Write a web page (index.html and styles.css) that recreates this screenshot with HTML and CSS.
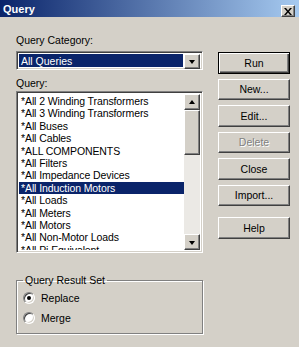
FILE: index.html
```html
<!DOCTYPE html>
<html lang="en">
<head>
  <meta charset="UTF-8" />
  <title>Query</title>
  <meta name="viewport" content="width=device-width, initial-scale=1" />
  <link rel="stylesheet" href="styles.css">
</head>
<body>
  <div class="window">
    <div class="titlebar">
      <span class="title">Query</span>
      <span class="close">
        <svg viewBox="0 0 8 7" width="8" height="7">
          <path d="M0 0h2l2 2.5 2-2.5h2l-3 3.5 3 3.5h-2l-2-2.5-2 2.5h-2l3-3.5z" fill="#000"/>
        </svg>
      </span>
    </div>

    <div class="content">
      <div class="left">
        <div class="label">Query Category:</div>
        <div class="combo sunken">
          <div class="combo-value">All Queries</div>
          <div class="arrow-btn raised"><span class="tri-down"></span></div>
        </div>

        <div class="label label-query">Query:</div>
        <div class="listbox sunken">
          <ul class="items">
            <li>*All 2 Winding Transformers</li>
            <li>*All 3 Winding Transformers</li>
            <li>*All Buses</li>
            <li>*All Cables</li>
            <li>*ALL COMPONENTS</li>
            <li>*All Filters</li>
            <li>*All Impedance Devices</li>
            <li class="selected">*All Induction Motors</li>
            <li>*All Loads</li>
            <li>*All Meters</li>
            <li>*All Motors</li>
            <li>*All Non-Motor Loads</li>
            <li>*All Pi Equivalent</li>
          </ul>
          <div class="scrollbar">
            <div class="arrow-btn raised"><span class="tri-up"></span></div>
            <div class="track">
              <div class="thumb raised"></div>
            </div>
            <div class="arrow-btn raised"><span class="tri-down"></span></div>
          </div>
        </div>

        <fieldset class="group">
          <legend>Query Result Set</legend>
          <label class="option"><span class="radio checked"></span>Replace</label>
          <label class="option"><span class="radio"></span>Merge</label>
        </fieldset>
      </div>

      <div class="buttons">
        <div class="btn default">Run</div>
        <div class="btn raised">New...</div>
        <div class="btn raised">Edit...</div>
        <div class="btn raised disabled">Delete</div>
        <div class="btn raised">Close</div>
        <div class="btn raised">Import...</div>
        <div class="btn raised help">Help</div>
      </div>
    </div>
  </div>
</body>
</html>
```

FILE: styles.css
```css
body {
  margin: 0;
  background: #d4d0c8;
}
.window {
  width: 299px;
  height: 347px;
  background: #d4d0c8;
  font-family: "Liberation Sans", Arial, sans-serif;
  font-size: 10.5px;
  color: #000;
  overflow: hidden;
}
.titlebar {
  height: 17px;
  display: flex;
  align-items: center;
  padding: 0 4px 0 3px;
  background: linear-gradient(to right, #0a246a, #a6caf0);
}
.title {
  color: #fff;
  font-weight: bold;
  font-size: 11px;
}
.close {
  margin-left: auto;
  margin-top: 5px;
  width: 14px;
  height: 12px;
  box-sizing: border-box;
  display: flex;
  justify-content: center;
  align-items: center;
  background: #d4d0c8;
  border: 1px solid;
  border-color: #fff #404040 #404040 #fff;
  box-shadow: inset -1px -1px #808080;
}

.raised {
  background: #d4d0c8;
  border: 1px solid;
  border-color: #fff #404040 #404040 #fff;
  box-shadow: inset -1px -1px #808080, inset 1px 1px #d4d0c8;
  box-sizing: border-box;
}
.sunken {
  border: 1px solid;
  border-color: #808080 #fff #fff #808080;
  box-shadow: inset 1px 1px #404040, inset -1px -1px #d4d0c8;
  box-sizing: border-box;
}

.content {
  display: flex;
  gap: 15px;
  padding: 17px 0 0 16px;
}
.left {
  width: 187px;
  display: flex;
  flex-direction: column;
}
.label {
  line-height: 13px;
  margin-bottom: 4px;
}
.label-query {
  margin: 7px 0 1px;
}

.combo {
  height: 19px;
  background: #fff;
  display: flex;
  padding: 2px;
  gap: 1px;
}
.combo-value {
  flex: 1;
  background: #0a246a;
  color: #fff;
  line-height: 15px;
  padding-left: 2px;
}
.arrow-btn {
  width: 16px;
  height: 15px;
  display: flex;
  justify-content: center;
  align-items: center;
}
.tri-down {
  width: 0;
  height: 0;
  border-left: 3.5px solid transparent;
  border-right: 3.5px solid transparent;
  border-top: 4px solid #000;
  margin-top: 1px;
}
.tri-up {
  width: 0;
  height: 0;
  border-left: 3.5px solid transparent;
  border-right: 3.5px solid transparent;
  border-bottom: 4px solid #000;
}

.listbox {
  height: 162px;
  background: #fff;
  display: flex;
  padding: 2px;
}
.items {
  flex: 1;
  list-style: none;
  margin: 0;
  padding: 1px 0 0;
  overflow: hidden;
}
.items li {
  height: 12.4px;
  line-height: 12.4px;
  padding-left: 2px;
  white-space: nowrap;
  letter-spacing: -0.1px;
}
.items .selected {
  background: #0a246a;
  color: #fff;
}
.scrollbar {
  width: 16px;
  display: flex;
  flex-direction: column;
}
.scrollbar .arrow-btn {
  height: 16px;
}
.track {
  flex: 1;
  background: #ebe9e5;
}
.thumb {
  height: 45px;
}

.group {
  margin: 21px 0 0;
  padding: 1px 6px 4px;
  height: 60px;
  box-sizing: border-box;
  border: 1px solid #808080;
  box-shadow: inset 1px 1px #fff, 1px 1px #fff;
}
.group legend {
  padding: 0 2px;
  line-height: 13px;
}
.option {
  display: flex;
  align-items: center;
  gap: 6px;
  height: 20px;
}
.radio {
  width: 12px;
  height: 12px;
  border-radius: 50%;
  background: #fff;
  box-sizing: border-box;
  border: 1px solid;
  border-color: #808080 #fff #fff #808080;
  box-shadow: inset 1px 1px #404040, inset -1px -1px #d4d0c8;
  display: flex;
  justify-content: center;
  align-items: center;
}
.radio.checked::after {
  content: "";
  width: 4px;
  height: 4px;
  border-radius: 50%;
  background: #000;
}

.buttons {
  width: 72px;
  display: flex;
  flex-direction: column;
  gap: 5px;
  padding-top: 18px;
}
.btn {
  height: 21.5px;
  display: flex;
  justify-content: center;
  align-items: center;
}
.btn.default {
  background: #d4d0c8;
  border: 1px solid #000;
  box-sizing: border-box;
  box-shadow: inset 1px 1px #fff, inset -1px -1px #404040, inset -2px -2px #808080;
}
.btn.disabled {
  color: #808080;
  text-shadow: 1px 1px #fff;
}
.btn.help {
  margin-top: 6px;
}
```
